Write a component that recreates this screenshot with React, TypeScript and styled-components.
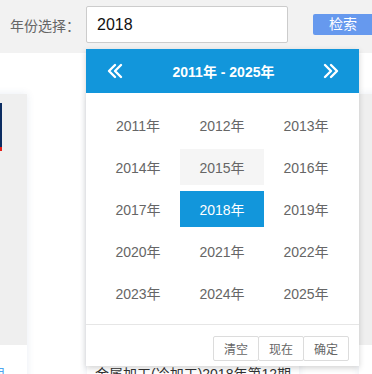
import styled, { createGlobalStyle } from "styled-components";

const GlobalStyle = createGlobalStyle`
  html, body {
    margin: 0;
    padding: 0;
    background: #fff;
  }
  body {
    font-family: "Liberation Sans", "Noto Sans CJK SC", sans-serif;
  }
`;

const years = Array.from({ length: 15 }, (_, i) => 2011 + i);
const selected = 2018;
const hovered = 2015;

const cards = [
  { title: "金属加工(冷)2018年第11期", cover: true, active: true },
  { title: "金属加工(冷加工)2018年第12期", cover: false, active: false },
  { title: "金属加工2019年第1期", cover: false, active: false },
];

function Chevrons({ dir }: { dir: "left" | "right" }) {
  const pts =
    dir === "left"
      ? ["8,2 2,8 8,14", "14,2 8,8 14,14"]
      : ["2,2 8,8 2,14", "8,2 14,8 8,14"];
  return (
    <svg width="16" height="16" viewBox="0 0 16 16">
      {pts.map((p) => (
        <polyline
          key={p}
          points={p}
          fill="none"
          stroke="#fff"
          strokeWidth="2.4"
          strokeLinecap="round"
          strokeLinejoin="round"
        />
      ))}
    </svg>
  );
}

export default function App() {
  return (
    <>
      <GlobalStyle />
      <Page>
        <SearchBar>
          <Label>年份选择：</Label>
          <InputWrap>
            <YearInput value="2018" readOnly />
            <Picker>
              <PickerHead>
                <NavBtn>
                  <Chevrons dir="left" />
                </NavBtn>
                <Range>2011年 - 2025年</Range>
                <NavBtn>
                  <Chevrons dir="right" />
                </NavBtn>
              </PickerHead>
              <YearGrid>
                {years.map((y) => (
                  <YearCell
                    key={y}
                    $selected={y === selected}
                    $hover={y === hovered}
                  >
                    {y}年
                  </YearCell>
                ))}
              </YearGrid>
              <PickerFoot>
                <FootBtn>清空</FootBtn>
                <FootBtn>现在</FootBtn>
                <FootBtn>确定</FootBtn>
              </PickerFoot>
            </Picker>
          </InputWrap>
          <SearchBtn>检索</SearchBtn>
        </SearchBar>
        <CardRow>
          {cards.map((c) => (
            <Card key={c.title}>
              <Cover>{c.cover && <Thumb />}</Cover>
              <CardTitle $active={c.active}>{c.title}</CardTitle>
            </Card>
          ))}
        </CardRow>
      </Page>
    </>
  );
}

const Page = styled.div`
  position: relative;
  width: 372px;
  height: 374px;
  overflow: hidden;
  background: #fff;
`;

const SearchBar = styled.div`
  display: flex;
  align-items: center;
  height: 53px;
  padding: 0 0 4px 10px;
  box-sizing: border-box;
  background: #f2f2f2;
`;

const Label = styled.span`
  flex-shrink: 0;
  width: 76px;
  white-space: nowrap;
  font-size: 14px;
  color: #666;
`;

const InputWrap = styled.div`
  position: relative;
  flex-shrink: 0;
  z-index: 5;
`;

const YearInput = styled.input`
  display: block;
  width: 202px;
  height: 37px;
  box-sizing: border-box;
  border: 1px solid #ccc;
  border-radius: 2px;
  padding: 0 10px;
  font-family: inherit;
  font-size: 16px;
  color: #111;
  background: #fff;
  outline: none;
`;

const SearchBtn = styled.button`
  margin-left: 25px;
  flex-shrink: 0;
  width: 70px;
  height: 21px;
  padding: 0 0 0 16px;
  text-align: left;
  border: none;
  border-radius: 2px;
  background: #6699ee;
  color: #fff;
  font-family: inherit;
  font-size: 14px;
  line-height: 21px;
`;

const Picker = styled.div`
  position: absolute;
  left: 0;
  top: 43px;
  width: 273px;
  background: #fff;
  box-shadow: 0 2px 6px rgba(0, 0, 0, 0.18);
`;

const PickerHead = styled.div`
  display: flex;
  align-items: center;
  justify-content: space-between;
  height: 44px;
  padding: 0 20px 0 21px;
  background: #1296db;
  color: #fff;
`;

const NavBtn = styled.span`
  display: flex;
  width: 16px;
  height: 16px;
`;

const Range = styled.span`
  font-size: 14px;
  font-weight: bold;
  margin-left: 1px;
`;

const YearGrid = styled.div`
  display: grid;
  grid-template-columns: repeat(3, 84px);
  grid-auto-rows: 36px;
  row-gap: 6px;
  padding: 14px 10px 13px;
`;

const YearCell = styled.div<{ $selected?: boolean; $hover?: boolean }>`
  display: flex;
  align-items: center;
  justify-content: center;
  font-size: 14px;
  color: ${(p) => (p.$selected ? "#fff" : "#666")};
  background: ${(p) =>
    p.$selected ? "#1296db" : p.$hover ? "#f5f5f5" : "transparent"};
`;

const PickerFoot = styled.div`
  display: flex;
  justify-content: flex-end;
  border-top: 1px solid #e6e6e6;
  padding: 11px 10px 5px;
`;

const FootBtn = styled.button`
  height: 25px;
  width: 46px;
  margin-left: -1px;
  padding: 0;
  border: 1px solid #dcdcdc;
  border-radius: 2px;
  background: #fff;
  color: #666;
  font-family: inherit;
  font-size: 12px;
`;

const CardRow = styled.div`
  display: flex;
  gap: 60px;
  margin: 41px 0 0 -185px;
`;

const Card = styled.div`
  flex-shrink: 0;
  width: 212px;
  background: #fff;
  box-shadow: 0 0 8px rgba(40, 80, 140, 0.1);
`;

const Cover = styled.div`
  height: 251px;
  padding: 9px 25px 0 20px;
  box-sizing: border-box;
  background: #efefef;
`;

const Thumb = styled.div`
  height: 44px;
  background: #0c2d62;
  border-bottom: 4px solid #e4201a;
`;

const CardTitle = styled.div<{ $active?: boolean }>`
  padding: 19px 0 10px;
  font-size: 14px;
  line-height: 20px;
  white-space: nowrap;
  text-align: center;
  color: ${(p) => (p.$active ? "#4da6f0" : "#333")};
`;
